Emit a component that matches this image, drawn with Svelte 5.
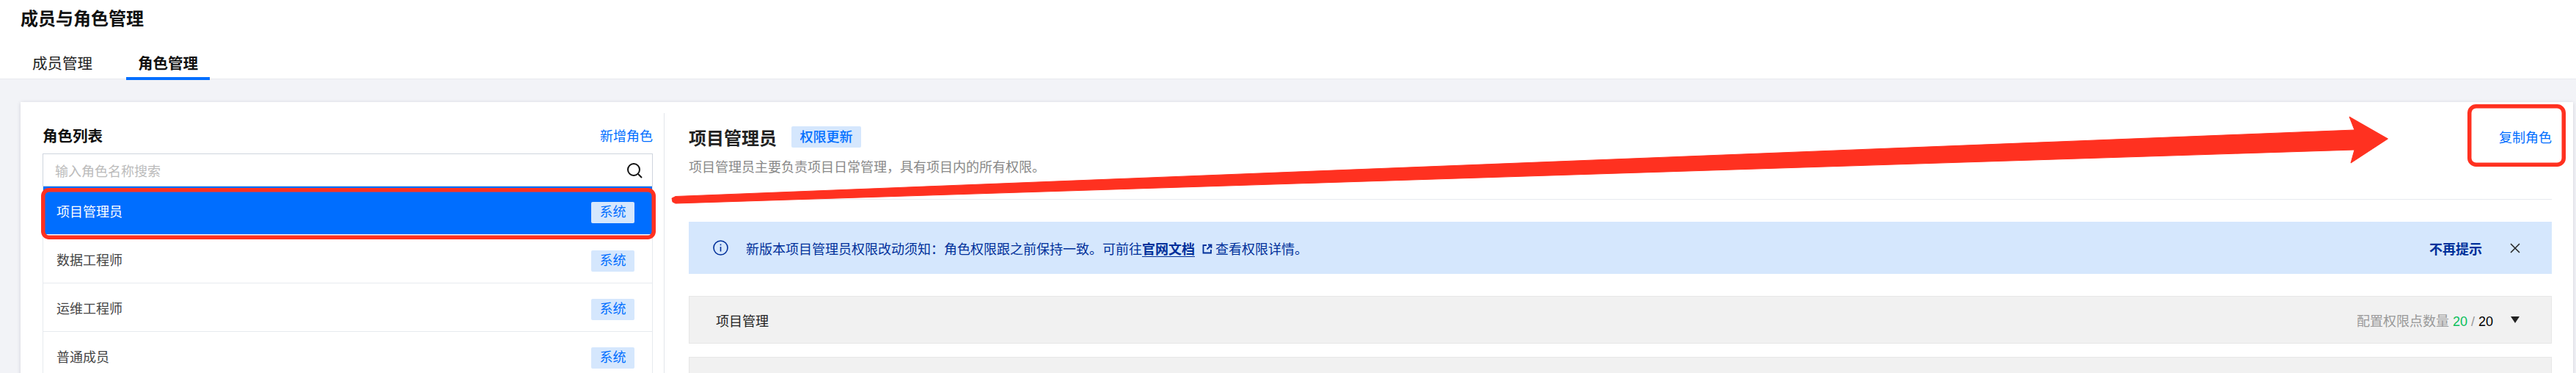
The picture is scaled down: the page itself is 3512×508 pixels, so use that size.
<script>
	const roles = [
		{ name: '项目管理员', selected: true },
		{ name: '数据工程师' },
		{ name: '运维工程师' },
		{ name: '普通成员' }
	];
</script>

<div class="page">
	<header class="head">
		<h1>成员与角色管理</h1>
		<nav class="tabs">
			<span class="tab">成员管理</span>
			<span class="tab active">角色管理</span>
		</nav>
	</header>

	<main class="card">
		<aside class="side">
			<div class="side-head">
				<h2>角色列表</h2>
				<span class="link">新增角色</span>
			</div>
			<div class="search">
				<span>输入角色名称搜索</span>
				<svg width="24" height="24" viewBox="0 0 24 24" fill="none" stroke="#111" stroke-width="2">
					<circle cx="11" cy="11" r="8" />
					<path d="M17 17l5 5" />
				</svg>
			</div>
			<ul class="roles">
				{#each roles as role}
					<li class:selected={role.selected}>
						<span class="role-name">{role.name}</span>
						<span class="tag">系统</span>
					</li>
				{/each}
			</ul>
		</aside>

		<section class="detail">
			<div class="detail-head">
				<div>
					<div class="detail-title">
						<h2>项目管理员</h2>
						<span class="tag strong">权限更新</span>
					</div>
					<p>项目管理员主要负责项目日常管理，具有项目内的所有权限。</p>
				</div>
				<span class="link">复制角色</span>
			</div>

			<div class="notice">
				<svg class="info" width="21" height="21" viewBox="0 0 21 21" fill="none" stroke="#00309a" stroke-width="1.6">
					<circle cx="10.5" cy="10.5" r="9.5" />
					<path d="M10.5 9v6.5M10.5 5.5v1.8" />
				</svg>
				<span class="notice-text">新版本项目管理员权限改动须知：角色权限跟之前保持一致。可前往<b>官网文档</b><svg class="ext" width="14" height="14" viewBox="0 0 14 14" fill="none" stroke="#00309a" stroke-width="1.8"><path d="M6 2H1.5v10.5H12V8M8 1.5h4.5V6M12.5 1.5L6.5 7.5" /></svg>查看权限详情。</span>
				<b class="dismiss">不再提示</b>
				<svg class="close" width="14" height="14" viewBox="0 0 14 14" fill="none" stroke="#222" stroke-width="1.5">
					<path d="M1 1l12 12M13 1L1 13" />
				</svg>
			</div>

			<div class="group">
				<span>项目管理</span>
				<span class="count">配置权限点数量 <em>20</em> / <i>20</i></span>
				<span class="caret"></span>
			</div>
			<div class="group"></div>
		</section>
	</main>

	<svg class="marks" width="3512" height="508" viewBox="0 0 3512 508">
		<rect x="58.75" y="258.75" width="832.5" height="64.5" rx="8" fill="none" stroke="#ff3120" stroke-width="5.5" />
		<rect x="3366.75" y="144.75" width="128.5" height="79.5" rx="9" fill="none" stroke="#ff3120" stroke-width="5.5" />
		<polygon fill="#ff3120" stroke="#ff3120" stroke-linejoin="round" points="921,267.5 3210,177 3203,159 3255.5,189 3205,222 3210,204 921,277 917,275 916,270" />
	</svg>
</div>

<style>
	:global(body) {
		margin: 0;
	}

	.page {
		position: relative;
		width: 3512px;
		height: 508px;
		overflow: hidden;
		background: #f2f3f7;
		font-family: 'Liberation Sans', 'Noto Sans CJK SC', sans-serif;
		font-size: 18px;
		color: #222;
	}

	.head {
		height: 108px;
		box-sizing: border-box;
		padding: 13px 28px 0;
		background: #fff;
		border-bottom: 1px solid #e7eaef;
	}

	h1 {
		margin: 0;
		font-size: 24px;
		line-height: 26px;
		color: #111;
	}

	.tabs {
		display: flex;
		gap: 30px;
		margin-top: 20px;
	}

	.tab {
		width: 114px;
		height: 50px;
		box-sizing: border-box;
		padding-top: 16px;
		text-align: center;
		font-size: 20.5px;
		line-height: 24px;
	}

	.tab.active {
		font-weight: 700;
		color: #111;
		border-bottom: 4px solid #006eff;
	}

	.card {
		display: flex;
		margin: 31px 4px 0 28px;
		height: 400px;
		background: #fff;
		box-shadow: 0 1px 5px rgba(54, 58, 80, 0.18);
	}

	.side {
		box-sizing: border-box;
		width: 878px;
		padding: 15px 15px 0 30px;
		margin-top: 15px;
		border-right: 1px solid #e3e6eb;
	}

	.side-head {
		display: flex;
		align-items: center;
		justify-content: space-between;
		height: 30px;
	}

	h2 {
		margin: 0;
		font-size: 20.5px;
		color: #111;
	}

	.link {
		color: #006eff;
	}

	.search {
		display: flex;
		align-items: center;
		justify-content: space-between;
		box-sizing: border-box;
		height: 45px;
		margin-top: 10px;
		padding: 0 12px 0 16px;
		border: 1px solid #cfd5de;
		color: #bbb;
	}

	.roles {
		list-style: none;
		margin: 0;
		padding: 0;
		border-left: 1px solid #e7eaef;
		border-right: 1px solid #e7eaef;
	}

	.roles li {
		display: flex;
		justify-content: space-between;
		align-items: center;
		box-sizing: border-box;
		height: 66px;
		padding: 0 24px 0 18px;
		border-bottom: 1px solid #e7eaef;
	}

	.role-name {
		color: #444;
	}

	.roles .tag {
		margin-top: 5px;
	}

	.roles li.selected {
		background: #006eff;
		border-bottom: 1px solid #fff;
	}

	.roles li.selected .role-name {
		color: #fff;
	}

	.tag {
		display: inline-flex;
		align-items: center;
		justify-content: center;
		width: 59px;
		height: 29px;
		border-radius: 2px;
		background: #d5e7fd;
		color: #006eff;
		line-height: 1;
	}

	.tag.strong {
		width: 95px;
		font-weight: 500;
	}

	.detail {
		flex: 1;
		padding: 33px 29px 0 33px;
	}

	.detail-head {
		display: flex;
		justify-content: space-between;
		height: 99px;
		border-bottom: 1px solid #e7eaef;
	}

	.detail-title {
		display: flex;
		align-items: center;
		gap: 20px;
		height: 29px;
	}

	.detail-title h2 {
		font-size: 24px;
		color: #222;
	}

	p {
		margin: 14px 0 0;
		line-height: 27px;
		color: #888;
	}

	.detail-head .link {
		margin-top: 3px;
		line-height: 27px;
	}

	.notice {
		display: flex;
		align-items: center;
		height: 71px;
		margin-top: 30px;
		padding: 0 43px 0 33px;
		background: #d5e7fd;
		color: #00309a;
	}

	.notice-text {
		flex: 1;
		margin-left: 24px;
	}

	.notice-text b {
		text-decoration: underline;
		text-underline-offset: 3px;
	}

	.ext {
		margin: 0 4px 0 10px;
	}

	.close {
		margin-left: 38px;
	}

	.group {
		display: flex;
		align-items: center;
		box-sizing: border-box;
		height: 65px;
		margin-top: 30px;
		padding: 0 43px 0 36px;
		background: #f1f1f1;
		border: 1px solid #e7e7e7;
	}

	.group + .group {
		margin-top: 18px;
	}

	.count {
		margin-left: auto;
		color: #999;
	}

	.count em {
		font-style: normal;
		color: #0abf5b;
	}

	.count i {
		font-style: normal;
		color: #000;
	}

	.caret {
		width: 0;
		height: 0;
		margin: 0 0 0 24px;
		border-left: 6px solid transparent;
		border-right: 6px solid transparent;
		border-top: 9px solid #222;
	}

	.marks {
		position: absolute;
		left: 0;
		top: 0;
	}
</style>
